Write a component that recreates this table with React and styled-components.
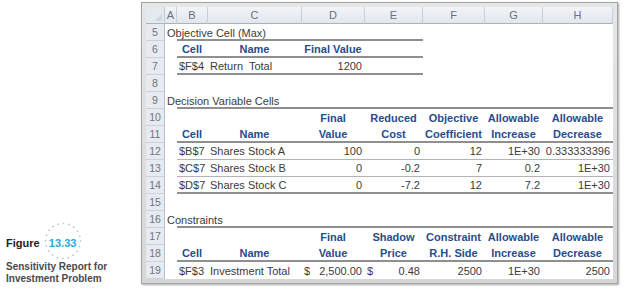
import React from 'react';
import styled, { createGlobalStyle } from 'styled-components';

const Global = createGlobalStyle`
  html, body { margin: 0; padding: 0; background: #fff; }
  body { font-family: "Liberation Sans", Arial, sans-serif; }
`;

const Page = styled.div`
  width: 624px;
  height: 290px;
  display: flex;
  overflow: hidden;
`;

const Caption = styled.div`
  width: 135px;
  padding: 0 0 5px 6px;
  display: flex;
  flex-direction: column;
  justify-content: flex-end;
`;

const FigureRow = styled.div`
  display: flex;
  align-items: center;
  gap: 4px;
  height: 38px;
  margin-bottom: 1px;
`;

const FigureWord = styled.span`
  font-size: 11px;
  font-weight: 700;
  color: #222;
  padding-top: 4px;
`;

const FigureBadge = styled.span`
  position: relative;
  width: 38px;
  height: 38px;
  display: flex;
  align-items: center;
  justify-content: center;
  padding-top: 4px;
  box-sizing: border-box;
  font-size: 11px;
  font-weight: 700;
  color: #2aa9da;
  svg { position: absolute; left: 0; top: 0; }
`;

const CaptionText = styled.div`
  font-size: 10px;
  line-height: 12px;
  font-weight: 700;
  color: #4a4a4a;
`;

const Frame = styled.div`
  margin-top: 2px;
  align-self: flex-start;
  border: 1px solid #a4a4a4;
  padding: 4px;
  background: linear-gradient(#e6e6e6, #d6d6d6);
  box-shadow: 1px 1px 2px rgba(0, 0, 0, 0.35);
`;

const Sheet = styled.div`
  display: grid;
  grid-template-columns: 19px 12px 31px 94px 63px 58px 62px 58px 70px;
  grid-auto-rows: 17px;
  background: #fff;
  font-size: 11px;
`;

const Corner = styled.div`
  position: relative;
  background: #e4e9f0;
  border-right: 1px solid #c3c9d2;
  border-bottom: 1px solid #aab2bd;
  &::after {
    content: '';
    position: absolute;
    right: 2px;
    bottom: 2px;
    border-left: 7px solid transparent;
    border-bottom: 7px solid #cfd5dd;
  }
`;

const ColHead = styled.div`
  display: flex;
  align-items: center;
  justify-content: center;
  background: linear-gradient(#f1f4f8, #e2e7ee);
  border-right: 1px solid #c9cfd7;
  border-bottom: 1px solid #aab2bd;
  color: #6a6f77;
  font-size: 11px;
`;

const RowHead = styled.div`
  display: flex;
  align-items: center;
  justify-content: center;
  background: #e7ebf1;
  border-right: 1px solid #b9c0ca;
  border-bottom: 1px solid #cdd2d9;
  color: #6c7480;
  font-size: 10.5px;
`;

const justify = { left: 'flex-start', center: 'center', right: 'flex-end', split: 'space-between' };

const Cell = styled.div`
  min-width: 0;
  display: flex;
  align-items: center;
  justify-content: ${p => justify[p.$align] || 'flex-start'};
  padding: 0 3px 0 ${p => (p.$title ? '2px' : '2px')};
  white-space: pre;
  font-weight: ${p => (p.$head ? 700 : 400)};
  color: ${p => (p.$head ? '#2a4c8c' : '#3b3b3b')};
  border-bottom: ${p =>
    p.$rule === 'thick' ? '2px solid #8f8f8f' : p.$rule === 'thin' ? '1px solid #b3b3b3' : 'none'};
  box-sizing: border-box;
`;

const COLS = ['A', 'B', 'C', 'D', 'E', 'F', 'G', 'H'];

const rows = [
  { n: 5, title: 'Objective Cell (Max)', rule: ['B', 'E', 'thick'] },
  { n: 6, head: true, cells: { B: 'Cell', C: 'Name', D: 'Final Value' }, rule: ['B', 'E', 'thick'] },
  { n: 7, cells: { B: '$F$4', C: 'Return  Total', D: '1200' }, rule: ['B', 'E', 'thick'] },
  { n: 8 },
  { n: 9, title: 'Decision Variable Cells', rule: ['B', 'H', 'thick'] },
  { n: 10, head: true, cells: { D: 'Final', E: 'Reduced', F: 'Objective', G: 'Allowable', H: 'Allowable' } },
  {
    n: 11,
    head: true,
    cells: { B: 'Cell', C: 'Name', D: 'Value', E: 'Cost', F: 'Coefficient', G: 'Increase', H: 'Decrease' },
    rule: ['B', 'H', 'thick'],
  },
  {
    n: 12,
    cells: { B: '$B$7', C: 'Shares Stock A', D: '100', E: '0', F: '12', G: '1E+30', H: '0.333333396' },
    rule: ['B', 'H', 'thin'],
  },
  {
    n: 13,
    cells: { B: '$C$7', C: 'Shares Stock B', D: '0', E: '-0.2', F: '7', G: '0.2', H: '1E+30' },
    rule: ['B', 'H', 'thin'],
  },
  {
    n: 14,
    cells: { B: '$D$7', C: 'Shares Stock C', D: '0', E: '-7.2', F: '12', G: '7.2', H: '1E+30' },
    rule: ['B', 'H', 'thick'],
  },
  { n: 15 },
  { n: 16, title: 'Constraints', rule: ['B', 'H', 'thick'] },
  { n: 17, head: true, cells: { D: 'Final', E: 'Shadow', F: 'Constraint', G: 'Allowable', H: 'Allowable' } },
  {
    n: 18,
    head: true,
    cells: { B: 'Cell', C: 'Name', D: 'Value', E: 'Price', F: 'R.H. Side', G: 'Increase', H: 'Decrease' },
    rule: ['B', 'H', 'thick'],
  },
  {
    n: 19,
    cells: {
      B: '$F$3',
      C: 'Investment Total',
      D: ['$', '2,500.00'],
      E: ['$', '0.48'],
      F: '2500',
      G: '1E+30',
      H: '2500',
    },
  },
];

function ruleFor(row, col) {
  if (!row.rule) return null;
  const [from, to, kind] = row.rule;
  const i = COLS.indexOf(col);
  return i >= COLS.indexOf(from) && i <= COLS.indexOf(to) ? kind : null;
}

function SheetRow({ row }) {
  return (
    <>
      <RowHead>{row.n}</RowHead>
      {COLS.map(col => {
        const rule = ruleFor(row, col);
        if (col === 'A' && row.title) {
          return (
            <Cell key={col} $title>
              {row.title}
            </Cell>
          );
        }
        const v = row.cells && row.cells[col];
        let align = 'right';
        if (row.head) align = 'center';
        else if (col === 'B' || col === 'C') align = 'left';
        if (Array.isArray(v)) align = 'split';
        return (
          <Cell key={col} $align={align} $head={row.head} $rule={rule}>
            {Array.isArray(v) ? (
              <>
                <span>{v[0]}</span>
                <span>{v[1]}</span>
              </>
            ) : (
              v
            )}
          </Cell>
        );
      })}
    </>
  );
}

function DottedRing() {
  return (
    <svg width="38" height="38" viewBox="0 0 38 38">
      <circle
        cx="19"
        cy="19"
        r="17.5"
        fill="none"
        stroke="#a9c3cf"
        strokeWidth="1.6"
        strokeLinecap="round"
        strokeDasharray="0.1 5.4"
      />
    </svg>
  );
}

export default function App() {
  return (
    <Page>
      <Global />
      <Caption>
        <FigureRow>
          <FigureWord>Figure</FigureWord>
          <FigureBadge>
            <DottedRing />
            13.33
          </FigureBadge>
        </FigureRow>
        <CaptionText>Sensitivity Report for</CaptionText>
        <CaptionText>Investment Problem</CaptionText>
      </Caption>
      <Frame>
        <Sheet>
          <Corner />
          {COLS.map(c => (
            <ColHead key={c}>{c}</ColHead>
          ))}
          {rows.map(r => (
            <SheetRow key={r.n} row={r} />
          ))}
        </Sheet>
      </Frame>
    </Page>
  );
}
